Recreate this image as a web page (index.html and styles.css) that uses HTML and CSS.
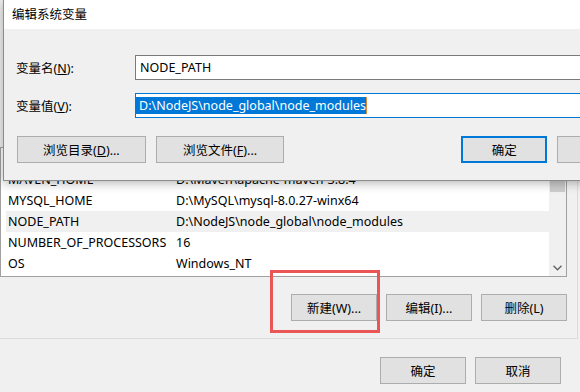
FILE: index.html
```html
<!DOCTYPE html>
<html lang="zh-CN">

<head>
    <meta charset="UTF-8">
    <meta name="viewport" content="width=device-width, initial-scale=1.0">
    <title>编辑系统变量</title>

    <link rel="stylesheet" href="styles.css">
</head>

<body>
    <!-- environment variables window, behind -->
    <div class="env_window">
        <div class="sys_group">
            <div class="var_list">
                <div class="rows">
                    <div class="row"><span class="name">MAVEN_HOME</span><span class="value">D:\Maven\apache-maven-3.8.4</span></div>
                    <div class="row"><span class="name">MYSQL_HOME</span><span class="value">D:\MySQL\mysql-8.0.27-winx64</span></div>
                    <div class="row selected"><span class="name">NODE_PATH</span><span class="value">D:\NodeJS\node_global\node_modules</span></div>
                    <div class="row"><span class="name">NUMBER_OF_PROCESSORS</span><span class="value">16</span></div>
                    <div class="row"><span class="name">OS</span><span class="value">Windows_NT</span></div>
                </div>
                <div class="scrollbar">
                    <div class="thumb"></div>
                    <div class="arrow">
                        <svg width="9" height="6" viewBox="0 0 9 6">
                            <path d="M0.5 0.8 L4.5 4.8 L8.5 0.8" fill="none" stroke="#606060" stroke-width="1.3"/>
                        </svg>
                    </div>
                </div>
            </div>
            <div class="list_buttons">
                <button type="button">新建(W)...</button>
                <button type="button">编辑(I)...</button>
                <button type="button">删除(L)</button>
            </div>
        </div>
        <div class="footer_buttons">
            <button type="button">确定</button>
            <button type="button">取消</button>
        </div>
    </div>

    <!-- red highlight around the new button -->
    <div class="mark"></div>

    <!-- edit dialog, on top -->
    <div class="edit_dialog">
        <div class="title">编辑系统变量</div>
        <div class="dialog_body">
            <div class="field">
                <label>变量名(<u>N</u>):</label>
                <div class="text_box">NODE_PATH</div>
            </div>
            <div class="field">
                <label>变量值(<u>V</u>):</label>
                <div class="text_box focused"><span class="selected_text">D:\NodeJS\node_global\node_modules</span></div>
            </div>
            <div class="dialog_buttons">
                <button type="button" class="wide">浏览目录(<u>D</u>)...</button>
                <button type="button" class="wide">浏览文件(<u>F</u>)...</button>
                <button type="button" class="ok">确定</button>
                <!-- cancel button, its label lies past the frame -->
                <button type="button"></button>
            </div>
        </div>
    </div>
</body>

</html>
```

FILE: styles.css
```css
html,
body {
    margin: 0;
    overflow: hidden;
}

body {
    width: 580px;
    height: 392px;
    position: relative;
    background: #f0f0f0;
    font-family: "Noto Sans", "Noto Sans CJK SC", sans-serif;
    font-size: 12.5px;
    color: #000;
}

button {
    font: inherit;
    color: inherit;
    width: 86px;
    height: 27px;
    padding: 0;
    box-sizing: border-box;
    background: #e1e1e1;
    border: 1px solid #adadad;
}

/* back window */
.sys_group {
    margin-left: -10px;
    width: 567px;
    padding: 147px 10px 17px 10px;
    border-right: 1px solid #dcdcdc;
    border-bottom: 1px solid #dcdcdc;
}

.var_list {
    display: flex;
    height: 130px;
    box-sizing: border-box;
    border: 1px solid #a0a0a0;
    background: #fff;
}

.rows {
    flex: 1;
    padding: 21px 0 0 5px;
}

.row {
    display: flex;
    height: 21px;
    line-height: 21px;
    white-space: nowrap;
}

.row.selected {
    background: #f0f0f0;
}

.name {
    width: 168px;
    padding-left: 2px;
}

.scrollbar {
    width: 17px;
    display: flex;
    flex-direction: column;
    background: #f0f0f0;
}

.thumb {
    height: 44px;
    margin: 0 1px;
    background: #cdcdcd;
}

.arrow {
    margin-top: auto;
    height: 17px;
    display: flex;
    align-items: center;
    justify-content: center;
}

.list_buttons {
    display: flex;
    justify-content: flex-end;
    gap: 9px;
    margin-top: 17px;
}

.footer_buttons {
    display: flex;
    justify-content: flex-end;
    gap: 9px;
    margin-top: 18px;
    padding-right: 19px;
}

.mark {
    position: absolute;
    left: 270px;
    top: 270px;
    width: 110px;
    height: 63px;
    box-sizing: border-box;
    border: 3px solid #ea5556;
}

/* front dialog */
.edit_dialog {
    position: absolute;
    left: 3px;
    top: 0;
    width: 640px;
    height: 181px;
    box-sizing: border-box;
    border-left: 1px solid #8c8c8c;
    border-bottom: 1px solid #8c8c8c;
    background: #f0f0f0;
    box-shadow: 0 2px 10px rgba(0, 0, 0, 0.3);
}

.title {
    height: 29px;
    line-height: 29px;
    padding-left: 8px;
    background: #fff;
}

.dialog_body {
    padding: 26px 0 0 12px;
}

.field {
    display: flex;
    align-items: center;
}

.field + .field {
    margin-top: 13px;
}

.field label {
    width: 119px;
}

.text_box {
    width: 480px;
    height: 25px;
    box-sizing: border-box;
    border: 1px solid #7a7a7a;
    background: #fff;
    padding-left: 4px;
    line-height: 23px;
}

.text_box.focused {
    display: flex;
    align-items: center;
    padding-left: 0;
    border-color: #0078d7;
}

.selected_text {
    line-height: 17px;
    padding-left: 3px;
    background: #0078d7;
    color: #fff;
    border-right: 1px solid #d98b3c;
}

.dialog_buttons {
    display: flex;
    gap: 10px;
    margin-top: 18px;
    padding-left: 1px;
}

.dialog_buttons .wide {
    width: 129px;
}

.dialog_buttons .ok {
    margin-left: 167px;
    border: 2px solid #0078d7;
}
```
